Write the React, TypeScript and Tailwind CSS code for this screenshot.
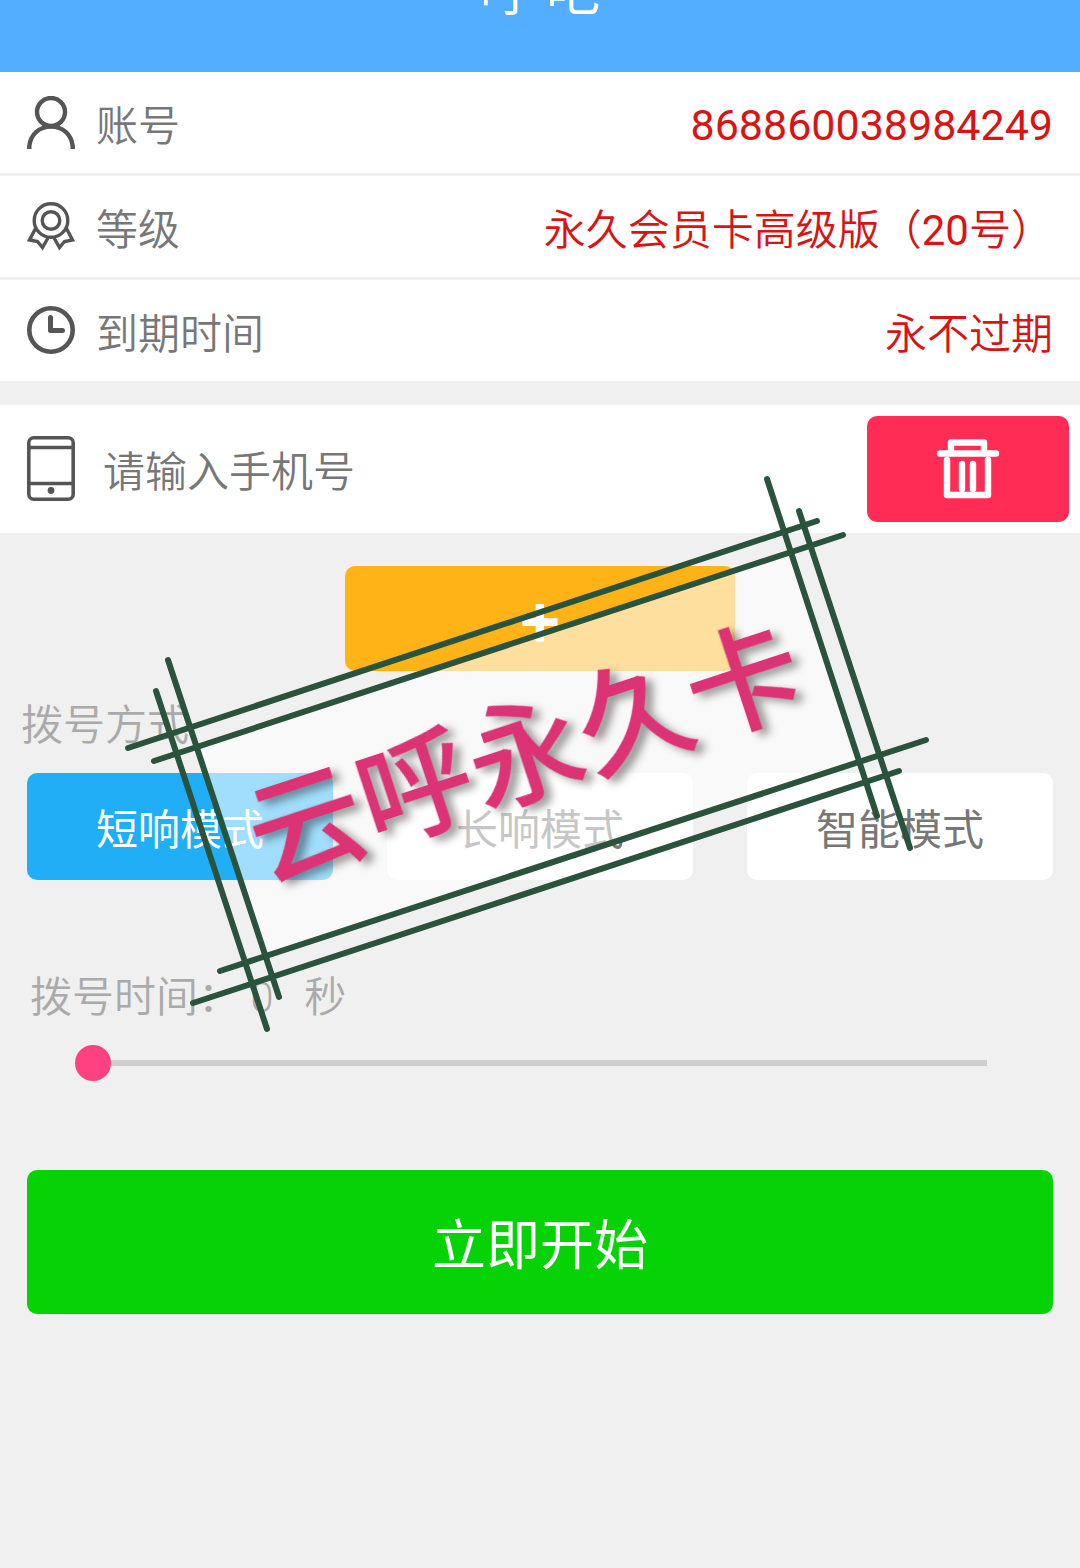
import { useState } from "react";
import type { ReactNode } from "react";

function UserIcon() {
  return (
    <svg viewBox="0 0 48 54" className="w-12 shrink-0" fill="none" stroke="#555" strokeWidth="4.4" aria-hidden="true">
      <circle cx="24" cy="16" r="14" />
      <path d="M2.3 53V50C3.500 38 12.500 30.600 24 30.600S44.500 38 45.700 50V53" />
    </svg>
  );
}

function MedalIcon() {
  return (
    <svg viewBox="0 0 48 50" className="w-12 shrink-0" fill="none" stroke="#555" strokeWidth="3.400" aria-hidden="true">
      <circle cx="24" cy="18.500" r="16.800" />
      <circle cx="24" cy="18.500" r="8.800" />
      <path d="M8.500 26.500L2.500 38L10.500 39.500L15.500 45.500L21.500 35" />
      <path d="M39.500 26.500L45.500 38L37.500 39.500L32.500 45.500L26.500 35" />
    </svg>
  );
}

function ClockIcon() {
  return (
    <svg viewBox="0 0 48 50" className="w-12 shrink-0" fill="none" stroke="#555" strokeWidth="4.600" strokeLinecap="round" strokeLinejoin="round" aria-hidden="true">
      <circle cx="24" cy="24" r="21.700" />
      <path d="M23.500 11.500V24.500H35.500" strokeWidth="5" />
    </svg>
  );
}

function PhoneIcon() {
  return (
    <svg viewBox="0 0 48 66" className="w-12 shrink-0" fill="none" stroke="#555" strokeWidth="3.600" aria-hidden="true">
      <rect x="1.800" y="1.800" width="44.400" height="61.400" rx="5" />
      <path d="M2 11.500H46M2 47.500H46" />
      <circle cx="24" cy="54.500" r="3.400" fill="#555" stroke="none" />
    </svg>
  );
}

function TrashIcon() {
  return (
    <svg viewBox="0 0 64 60" className="w-16" fill="none" stroke="#fff" strokeWidth="6.400" strokeLinecap="round" strokeLinejoin="round" aria-hidden="true">
      <path d="M4 14.500H60" />
      <path d="M15 14V3.500H48V14" />
      <path d="M11 21V56H52V21" />
      <path d="M26 25V50M37 25V50" />
    </svg>
  );
}

const frameLines = [
  [128, 748, 817, 521],
  [154, 761, 843, 535],
  [220, 971, 926, 740],
  [193, 1003, 899, 771],
  [156, 691, 267, 1029],
  [168, 660, 279, 997],
  [767, 479, 877, 816],
  [799, 511, 910, 848],
];

function Stamp() {
  return (
    <svg viewBox="120 470 820 570" className="pointer-events-none absolute left-[120px] top-[470px] w-[820px]">
      <polygon points="197,747 791,552 861,761 266,956" fill="#fff" fillOpacity="0.580" />
      <g stroke="#29533c" strokeWidth="6" strokeLinecap="round">
        {frameLines.map(([x1, y1, x2, y2]) => (
          <line key={`${x1}-${y1}`} x1={x1} y1={y1} x2={x2} y2={y2} />
        ))}
      </g>
      <text
        transform="translate(525 753) rotate(-18.200)"
        x="0"
        y="41"
        textAnchor="middle"
        fontSize="115"
        fill="#dc3374"
        className="font-['Noto_Sans_CJK_SC',sans-serif] font-medium drop-shadow-[6px_6px_4px_rgba(0,0,0,0.4)]"
      >
        云呼永久卡
      </text>
    </svg>
  );
}

function InfoRow({ icon, label, children }: { icon: ReactNode; label: string; children: ReactNode }) {
  return (
    <div className="flex h-[101px] items-center bg-white px-[27px]">
      {icon}
      <dt className="ml-[21px] text-[#777]">{label}</dt>
      <dd className="ml-auto text-[#d81414]">{children}</dd>
    </div>
  );
}

const modes = ["短响模式", "长响模式", "智能模式"];

export default function App() {
  const [mode, setMode] = useState(modes[0]);
  const [phone, setPhone] = useState("");
  const [seconds, setSeconds] = useState(0);

  return (
    <div className="relative min-h-screen bg-[#f0f0f0] font-['Noto_Sans_CJK_SC',sans-serif] text-[42px] leading-[60px] font-[350]">
      <header className="flex h-[72px] items-end justify-center overflow-hidden bg-[#54aeff] pb-[54px]">
        <h1 className="whitespace-pre text-[54px] font-normal leading-[60px] text-white">呼 吧</h1>
      </header>

      <dl className="flex flex-col gap-[3px]">
        <InfoRow icon={<UserIcon />} label="账号">
          <span className="block pt-1 font-[Roboto,sans-serif] text-[43px] font-normal">868860038984249</span>
        </InfoRow>
        <InfoRow icon={<MedalIcon />} label="等级">
          永久会员卡高级版（<span className="font-[Roboto,sans-serif] font-normal leading-none">20</span>号）
        </InfoRow>
        <InfoRow icon={<ClockIcon />} label="到期时间">
          永不过期
        </InfoRow>
      </dl>

      <div className="mt-6 flex h-32 items-center bg-white pl-[27px] pr-[11px]">
        <PhoneIcon />
        <input
          type="tel"
          aria-label="手机号"
          placeholder="请输入手机号"
          value={phone}
          onChange={(e) => setPhone(e.target.value)}
          className="ml-7 min-w-0 flex-1 bg-transparent text-[#555] outline-none placeholder:text-[#777]"
        />
        <button
          type="button"
          aria-label="清空"
          onClick={() => setPhone("")}
          className="flex h-[106px] w-[202px] items-center justify-center rounded-[10px] bg-[#ff2d55]"
        >
          <TrashIcon />
        </button>
      </div>

      <button
        type="button"
        aria-label="添加"
        className="mx-auto mt-[33px] flex h-[105px] w-[390px] items-center justify-center rounded-[10px] bg-[#ffb317] pt-2 font-[Roboto,sans-serif] text-[72px] font-medium text-white"
      >
        +
      </button>

      <h2 className="ml-[21px] mt-[21px] text-[#aaa]">拨号方式</h2>

      <div className="mt-[21px] grid grid-cols-3 gap-[54px] px-[27px]">
        {modes.map((m) => (
          <button
            key={m}
            type="button"
            aria-pressed={m === mode}
            onClick={() => setMode(m)}
            className={`h-[107px] rounded-[10px] font-normal ${m === mode ? "bg-[#20aff7] text-white" : "bg-white text-[#777]"}`}
          >
            {m}
          </button>
        ))}
      </div>

      <label htmlFor="seconds" className="ml-[30px] mt-[84px] block whitespace-pre text-[#aaa]">
        拨号时间：<span className="font-[Roboto,sans-serif] leading-none">{` ${seconds}   `}</span>秒
      </label>
      <div className="relative mx-[75px] mt-[21px] flex h-9 items-center">
        <div className="absolute inset-x-[18px] h-[6px] bg-[#cecece]" />
        <input
          id="seconds"
          type="range"
          min={0}
          max={60}
          value={seconds}
          onChange={(e) => setSeconds(Number(e.target.value))}
          className="relative h-9 w-full appearance-none bg-transparent [&::-webkit-slider-thumb]:size-9 [&::-webkit-slider-thumb]:appearance-none [&::-webkit-slider-thumb]:rounded-full [&::-webkit-slider-thumb]:bg-[#ff4081]"
        />
      </div>

      <div className="mt-[89px] px-[27px]">
        <button type="button" className="h-36 w-full rounded-[10px] bg-[#05d305] text-[54px] font-normal text-white">
          立即开始
        </button>
      </div>

      <Stamp />
    </div>
  );
}
